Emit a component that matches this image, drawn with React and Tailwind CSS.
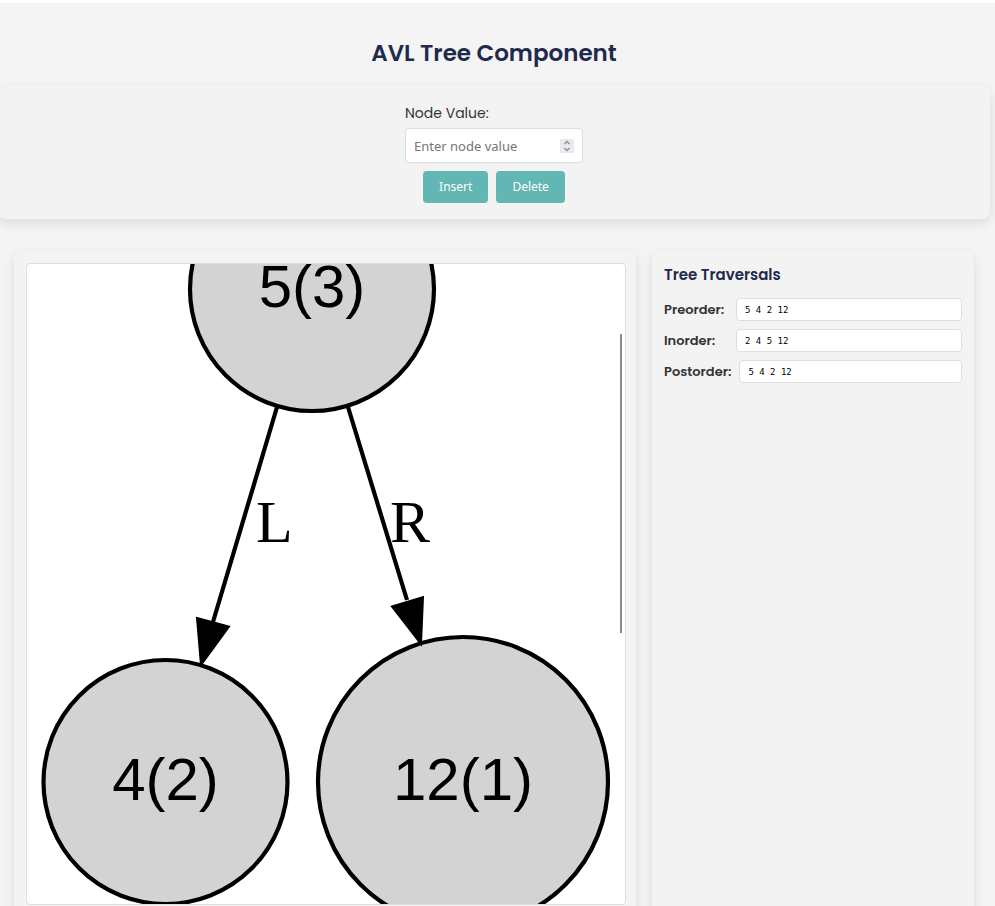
import { useState } from "react";

const traversals = [
  { id: "preorder", label: "Preorder:", values: "5 4 2 12" },
  { id: "inorder", label: "Inorder:", values: "2 4 5 12" },
  { id: "postorder", label: "Postorder:", values: "5 4 2 12" },
];

const nodes = [
  { label: "5(3)", cx: 285, cy: 25, r: 122 },
  { label: "4(2)", cx: 138.5, cy: 518, r: 122 },
  { label: "12(1)", cx: 436, cy: 518, r: 145 },
];

const cardShadow = "rounded-lg bg-[#f3f3f3] shadow-[0_4px_12px_rgba(0,0,0,0.1)]";
const buttonStyle =
  "h-8 rounded bg-[#62b6b4] px-4 font-['Noto_Sans',sans-serif] text-xs text-white hover:bg-[#4fa3a1]";

function Controls() {
  const [value, setValue] = useState("");
  return (
    <form
      className={`flex flex-col items-center px-4 pt-4 pb-4 ${cardShadow}`}
      onSubmit={(e) => e.preventDefault()}
    >
      <div className="flex w-[178px] flex-col">
        <label htmlFor="node-value" className="mb-1 text-sm leading-[22px] text-[#333333]">
          Node Value:
        </label>
        <div className="relative">
          <input
            id="node-value"
            type="number"
            value={value}
            onChange={(e) => setValue(e.target.value)}
            placeholder="Enter node value"
            className="block h-[35px] w-full appearance-none rounded border border-[#dddddd] bg-white px-2 font-['Noto_Sans',sans-serif] text-[13px] text-black [appearance:textfield] placeholder:text-[#757575]"
          />
          <svg
            viewBox="0 0 14 14"
            className="pointer-events-none absolute top-[11px] right-[9px] size-3.5"
            aria-hidden="true"
          >
            <rect width="14" height="14" fill="#e9e9ed" />
            <path
              d="M4.500 5 7 2.500 9.500 5M4.500 9 7 11.500 9.500 9"
              fill="none"
              stroke="#8f8f9d"
              strokeWidth="1.4"
            />
          </svg>
        </div>
      </div>
      <div className="mt-2 flex gap-2">
        <button type="submit" className={buttonStyle}>Insert</button>
        <button type="button" className={buttonStyle}>Delete</button>
      </div>
    </form>
  );
}

function TreeView() {
  return (
    <section className={`min-w-0 flex-1 py-3 pr-2.5 pl-3 ${cardShadow}`}>
      <div className="relative h-[642px] overflow-hidden rounded border border-[#dddddd] bg-white">
        <svg viewBox="0 0 598 640" className="block w-full" role="img" aria-label="AVL tree">
          {nodes.map((n) => (
            <g key={n.label}>
              <circle cx={n.cx} cy={n.cy} r={n.r} fill="#d3d3d3" stroke="#000" strokeWidth="4.2" />
              <text
                x={n.cx}
                y={n.cy + 18}
                textAnchor="middle"
                fontSize="60"
                className="font-['Liberation_Sans',Arial,sans-serif]"
              >
                {n.label}
              </text>
            </g>
          ))}
          <g stroke="#000" strokeWidth="4.2">
            <path d="M250 143 186 358M321 143 380 336" />
          </g>
          <path
            d="M170 354 202 362.500 174 401ZM365 342.500 396 333 394 380Z"
            stroke="#000"
            strokeWidth="2"
          />
          <g fontSize="60" className="font-['Liberation_Serif','Times_New_Roman',serif]">
            <text x="229" y="278">L</text>
            <text x="363" y="278">R</text>
          </g>
        </svg>
        <div className="absolute top-[70px] right-[3px] h-[299px] w-0.5 bg-[#8b8b8b]" />
      </div>
    </section>
  );
}

function Traversals() {
  return (
    <aside className={`w-[322px] shrink-0 p-3 ${cardShadow}`}>
      <h2 className="mb-3 text-[15px] leading-[23px] font-semibold text-[#1f2a4d]">
        Tree Traversals
      </h2>
      <div className="flex flex-col gap-2">
        {traversals.map((t) => (
          <div key={t.id} className="flex items-center gap-2">
            <label htmlFor={t.id} className="min-w-16 text-[13px] font-semibold text-[#333333]">
              {t.label}
            </label>
            <input
              id={t.id}
              readOnly
              value={t.values}
              className="h-[23px] min-w-0 flex-1 rounded border border-[#dddddd] bg-white px-2 font-['DejaVu_Sans_Mono',monospace] text-[9px] text-black"
            />
          </div>
        ))}
      </div>
    </aside>
  );
}

export default function App() {
  return (
    <div className="overflow-hidden bg-white pt-[3px] font-[Poppins,Inter,sans-serif]">
      <main className="flow-root bg-[#f4f4f4] pb-8">
        <div className="mr-[5px] -ml-0.5">
          <h1 className="pt-8 pb-3.5 text-center text-[23px] leading-[37px] font-semibold text-[#1f2a4d]">
            AVL Tree Component
          </h1>
          <Controls />
          <div className="mx-4 mt-8 flex gap-4">
            <TreeView />
            <Traversals />
          </div>
        </div>
      </main>
    </div>
  );
}
